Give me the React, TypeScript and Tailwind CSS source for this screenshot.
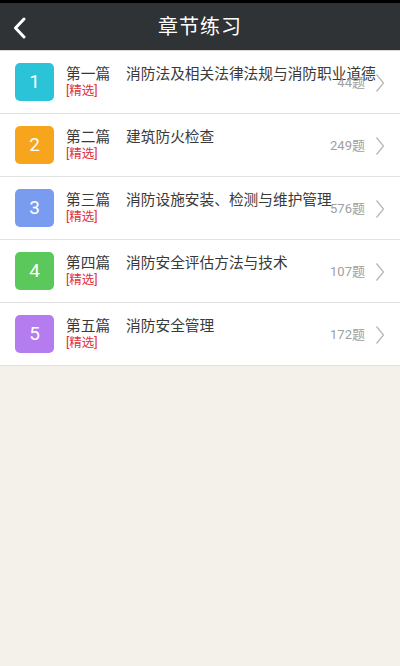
const chapters = [
  { no: '1', part: '第一篇', name: '消防法及相关法律法规与消防职业道德', count: 44, color: 'bg-[#2bc3d7]' },
  { no: '2', part: '第二篇', name: '建筑防火检查', count: 249, color: 'bg-[#f8a51e]' },
  { no: '3', part: '第三篇', name: '消防设施安装、检测与维护管理', count: 576, color: 'bg-[#7a9cf0]' },
  { no: '4', part: '第四篇', name: '消防安全评估方法与技术', count: 107, color: 'bg-[#5bc85c]' },
  { no: '5', part: '第五篇', name: '消防安全管理', count: 172, color: 'bg-[#b57cf0]' },
]

const font = { fontFamily: 'Roboto, "Noto Sans CJK SC", sans-serif' }

function ChapterRow({ c }: { c: (typeof chapters)[number] }) {
  return (
    <div className="relative flex h-[63px] items-center border-b border-[#e2e2e2] bg-white pl-[15px]">
      <div className={'flex h-[38px] w-[39px] shrink-0 items-center justify-center rounded-[5px] text-[19px] text-white ' + c.color}>
        {c.no}
      </div>
      <div className="ml-[12px] flex min-w-0 flex-col">
        <p className="whitespace-nowrap text-[14.7px] leading-[18px] text-[#3a3a3a]">
          {c.part}
          <span className="ml-[16px]">{c.name}</span>
        </p>
        <p className="mt-[-1px] text-[12.5px] leading-[18px] text-[#e0323a]">[精选]</p>
      </div>
      <div className="absolute right-[15px] top-0 flex h-full items-center pt-[1px]">
        <span className="text-[13px] text-[#a0a0a0]">{c.count}题</span>
        <svg width="10" height="20" viewBox="0 0 10 20" className="ml-[10px]">
          <path d="M1.5 1.5 L8.5 10 L1.5 18.5" fill="none" stroke="#b8b8b8" strokeWidth="1.3" />
        </svg>
      </div>
    </div>
  )
}

export default function App() {
  return (
    <div className="flex h-[666px] w-[400px] flex-col bg-[#f4f1eb]" style={font}>
      <div className="h-[3px] bg-black" />
      <div className="relative flex h-[47px] items-center justify-center bg-[#2f3336]">
        <svg width="16" height="22" viewBox="0 0 16 22" className="absolute left-[12px] top-[14px]">
          <path d="M12 2 L3.5 11 L12 20" fill="none" stroke="#fff" strokeWidth="3" strokeLinecap="round" strokeLinejoin="round" />
        </svg>
        <h1 className="text-[20px] tracking-[1px] text-white">章节练习</h1>
      </div>
      <div className="h-px bg-[#d8d8d8]" />
      <div>
        {chapters.map((c) => (
          <ChapterRow key={c.no} c={c} />
        ))}
      </div>
    </div>
  )
}
